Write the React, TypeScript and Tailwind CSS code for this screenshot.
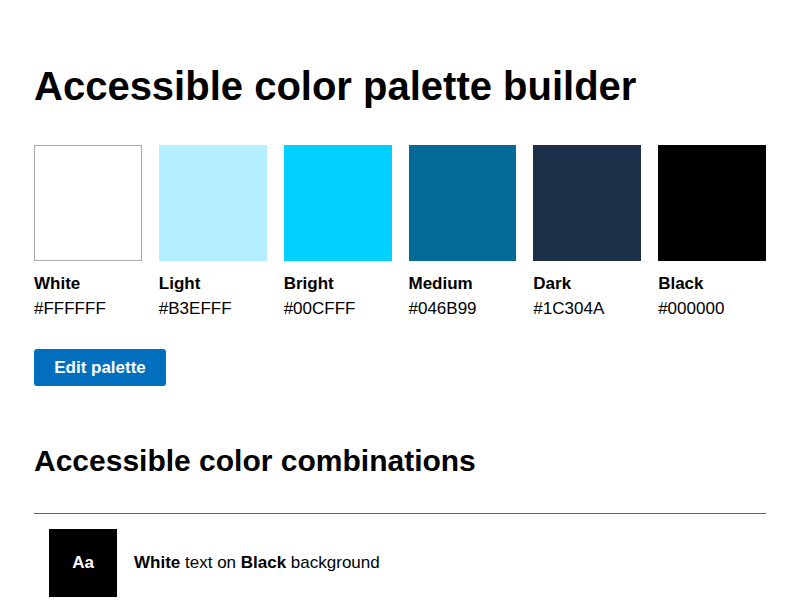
import React from "react";

const swatches = [
  { name: "White", hex: "#FFFFFF", cls: "bg-[#FFFFFF] border border-[#aaaaaa]" },
  { name: "Light", hex: "#B3EFFF", cls: "bg-[#B3EFFF]" },
  { name: "Bright", hex: "#00CFFF", cls: "bg-[#00CFFF]" },
  { name: "Medium", hex: "#046B99", cls: "bg-[#046B99]" },
  { name: "Dark", hex: "#1C304A", cls: "bg-[#1C304A]" },
  { name: "Black", hex: "#000000", cls: "bg-[#000000]" },
];

export default function App() {
  return (
    <div className="min-h-[600px] bg-white px-[34px] pt-[62px] text-black" style={{ fontFamily: '"Liberation Sans", Arial, sans-serif' }}>
      <h1 className="text-[40px] font-bold leading-[48px]">Accessible color palette builder</h1>
      <div className="mt-[35px] grid grid-cols-6 gap-[17px]">
        {swatches.map((s) => (
          <div key={s.name}>
            <div className={`h-[116px] ${s.cls}`} />
            <div className="mt-[13px] text-[17px] font-bold leading-[20px]">{s.name}</div>
            <div className="mt-[5px] text-[17px] leading-[20px]">{s.hex}</div>
          </div>
        ))}
      </div>
      <button className="mt-[30px] h-[37px] w-[132px] rounded-[3px] bg-[#0070BE] text-[17px] font-bold text-white">
        Edit palette
      </button>
      <h2 className="mt-[57px] text-[30px] font-bold leading-[36px]">Accessible color combinations</h2>
      <div className="mt-[34px] border-t border-[#666666]" />
      <div className="mt-[15px] flex items-center pl-[15px]">
        <div className="flex h-[68px] w-[68px] items-center justify-center bg-black text-[17px] font-bold text-white">Aa</div>
        <div className="ml-[17px] text-[17px]">
          <b>White</b> text on <b>Black</b> background
        </div>
      </div>
    </div>
  );
}
